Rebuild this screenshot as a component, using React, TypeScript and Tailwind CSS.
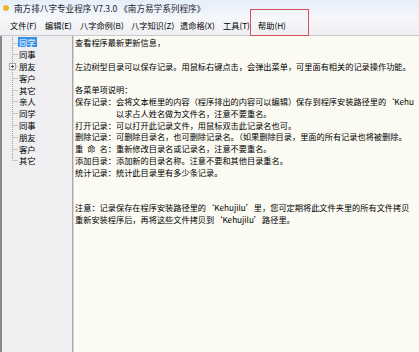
const font = { fontFamily: '"Noto Sans CJK SC", "Noto Sans", sans-serif' };

const menus: [string, string][] = [
  ["文件(F)", "w-[35px]"],
  ["编辑(E)", "w-[35px]"],
  ["八字命例(B)", "w-[51px]"],
  ["八字知识(Z)", "w-[49px]"],
  ["遗命格(X)", "w-[43px]"],
  ["工具(T)", "w-[35px]"],
  ["帮助(H)", "w-[40px]"],
];
const tree = ["同学", "同事", "朋友", "客户", "其它", "亲人", "同学", "同事", "朋友", "客户", "其它"];

const lines: [string, string][] = [
  ["", "查看程序最新更新信息，"],
  ["", ""],
  ["", "左边树型目录可以保存记录。用鼠标右键点击，会弹出菜单，可里面有相关的记录操作功能。"],
  ["", ""],
  ["", "各菜单项说明："],
  ["保存记录：", "会将文本框里的内容（程序排出的内容可以编辑）保存到程序安装路径里的‘Kehu"],
  ["　　　　　", "以求占人姓名做为文件名，注意不要重名。"],
  ["打开记录：", "可以打开此记录文件，用鼠标双击此记录名也可。"],
  ["删除记录：", "可删除目录名，也可删除记录名。（如果删除目录，里面的所有记录也将被删除。"],
  ["重\u2002命\u2002名：", "重新修改目录名或记录名，注意不要重名。"],
  ["添加目录：", "添加新的目录名称。注意不要和其他目录重名。"],
  ["统计记录：", "统计此目录里有多少条记录。"],
  ["", ""],
  ["", ""],
  ["", "注意：记录保存在程序安装路径里的‘Kehujilu’里，您可定期将此文件夹里的所有文件拷贝"],
  ["", "重新安装程序后，再将这些文件拷贝到‘Kehujilu’路径里。"],
];

function TreeLines({ last, plus }: { last: boolean; plus: boolean }) {
  return (
    <svg width="16" height="11.8" className="shrink-0">
      <line x1="10.5" y1="0" x2="10.5" y2={last ? 6 : 11.8} stroke="#a0a0a0" strokeDasharray="1 1" />
      <line x1="10.5" y1="6.5" x2="16" y2="6.5" stroke="#a0a0a0" strokeDasharray="1 1" />
      {plus && (
        <g>
          <rect x="7.5" y="3.5" width="6" height="6" fill="#f4f4f4" stroke="#a8a8a8" />
          <line x1="9" y1="6.5" x2="12" y2="6.5" stroke="#505050" />
          <line x1="10.5" y1="5" x2="10.5" y2="8" stroke="#505050" />
        </g>
      )}
    </svg>
  );
}

export default function App() {
  return (
    <div className="flex h-[352px] w-[419px] flex-col overflow-hidden bg-white text-black" style={font}>
      <div className="flex h-[16px] items-center gap-[4px] bg-gradient-to-b from-[#e6eef8] to-[#f3f6fa] pl-[3px] text-[8.6px] text-[#1a2433]">
        <span className="h-[6px] w-[6px] rounded-full bg-[#e8b82a]" />
        <span className="ml-[1px] whitespace-nowrap">南方排八字专业程序 V7.3.0 《南方易学系列程序》</span>
      </div>
      <div className="relative flex h-[20px] items-center border-b border-[#c8c8c8] bg-gradient-to-b from-[#f7f8fa] to-[#eef0f3] pl-[10px] text-[8.2px] text-black">
        {menus.map(([m, w], i) => (
          <span key={i} className={`${w} shrink-0 whitespace-nowrap`}>
            {m}
          </span>
        ))}
        <div className="absolute left-[250px] top-[-7px] h-[27px] w-[59px] border border-[#d9505a]" />
      </div>
      <div className="flex min-h-0 flex-1">
        <div className="w-[73px] shrink-0 border-l-2 border-r border-l-[#8a8a8a] border-r-[#a8a8a8] bg-[#efeff1] pt-[0.5px] text-[8.4px]">
          {tree.map((t, i) => (
            <div key={i} className="flex h-[11.8px] items-center">
              <TreeLines last={i === tree.length - 1} plus={i === 2} />
              <span className={i === 0 ? "bg-[#3590e8] px-[1px] leading-[10px] text-white" : "px-[1px] leading-[10px] text-black"}>{t}</span>
            </div>
          ))}
        </div>
        <div className="min-w-0 flex-1 overflow-hidden border-l border-[#d8d8d8] bg-[#fbfbf3] pl-[1px] pt-[1px] text-[8.2px] leading-[11.8px] text-black">
          {lines.map(([a, b], i) => (
            <div key={i} className="h-[11.8px] whitespace-nowrap">
              {a}
              {b}
            </div>
          ))}
        </div>
      </div>
    </div>
  );
}
